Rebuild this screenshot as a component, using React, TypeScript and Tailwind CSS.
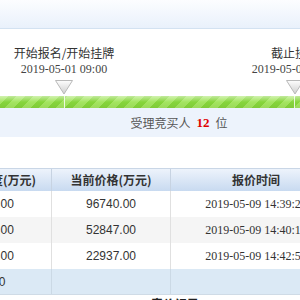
import React from 'react';

const cjk = "font-['Noto_Sans_CJK_SC',sans-serif]";
const serif = "font-['Liberation_Serif','Noto_Sans_CJK_SC',serif]";
const sans = "font-['Liberation_Sans','Noto_Sans_CJK_SC',sans-serif]";

type Node = { label: string; time: string };

const nodes: Node[] = [
  { label: '开始报名/开始挂牌', time: '2019-05-01 09:00' },
  { label: '截止挂牌', time: '2019-05-09 09:00' },
];

type Bid = { step: string; price: string; time: string };

const bids: Bid[] = [
  { step: '100.00', price: '96740.00', time: '2019-05-09 14:39:25' },
  { step: '100.00', price: '52847.00', time: '2019-05-09 14:40:13' },
  { step: '100.00', price: '22937.00', time: '2019-05-09 14:42:56' },
];

function Pointer() {
  return (
    <svg width="18" height="15" viewBox="0 0 18 15">
      <defs>
        <linearGradient id="tri" x1="0" y1="0" x2="0" y2="1">
          <stop offset="0" stopColor="#fdfdfd" />
          <stop offset="1" stopColor="#cfcfcf" />
        </linearGradient>
      </defs>
      <path d="M0.5 0.5 L17.5 0.5 L9 14 Z" fill="url(#tri)" stroke="#b9b9b9" strokeWidth="1" />
    </svg>
  );
}

function App() {
  return (
    <div className="w-[300px] h-[300px] overflow-hidden bg-white text-[#333]">
      {/* top strip */}
      <div className="h-[29px] bg-gradient-to-b from-[#fcfdff] to-[#e9f1fb] border-b border-[#d3e2f1]" />

      {/* timeline nodes */}
      <div className="flex pt-[16px] pl-[4px] gap-[111px]">
        {nodes.map((n) => (
          <div key={n.label} className="w-[120px] shrink-0 flex flex-col items-center">
            <div className={`${cjk} text-[12px] leading-[16px] text-[#333] whitespace-nowrap`}>{n.label}</div>
            <div className={`${serif} text-[12px] leading-[16px] text-[#444] whitespace-nowrap`}>{n.time}</div>
            <div className="mt-[3px] h-[16px]">
              <Pointer />
            </div>
          </div>
        ))}
      </div>

      {/* progress bar */}
      <div className="relative h-[12px] bg-[repeating-linear-gradient(135deg,#a3e55f_0px,#a3e55f_6px,#86d53b_6px,#86d53b_12px)]">
        <div className="absolute inset-0 bg-gradient-to-b from-white/50 via-transparent to-black/5" />
        <div className="absolute top-0 bottom-0 left-[64px] w-px bg-white/80" />
        <div className="absolute top-0 bottom-0 left-[294px] w-px bg-white/80" />
      </div>

      {/* applicants */}
      <div className={`h-[29px] bg-[#edf3fc] flex items-center justify-center pl-[58px] ${cjk} text-[12px] text-[#555]`}>
        受理竞买人
        <span className={`${serif} font-bold text-[#e00000] text-[13px] mx-[6px]`}>12</span>
        位
      </div>

      {/* bid table */}
      <div className="mt-[31px] -ml-[60px] w-[401px]">
        <div className="flex h-[23px] border-t border-[#c9d6e6] bg-gradient-to-b from-[#edf3fb] to-[#c8daf0] font-bold text-[12px]">
          <div className={`${cjk} w-[112px] border-r border-[#c7d3e2] flex items-center justify-center`}>加价幅度(万元)</div>
          <div className={`${cjk} w-[119px] border-r border-[#c7d3e2] flex items-center justify-center`}>当前价格(万元)</div>
          <div className={`${cjk} w-[170px] flex items-center justify-center`}>报价时间</div>
        </div>
        {bids.map((b, i) => (
          <div key={b.time} className={`flex h-[26px] text-[12px] ${i === 1 ? 'bg-[#f5f5f5]' : 'bg-white'}`}>
            <div className={`${sans} w-[112px] border-r border-[#e0e0e0] flex items-center justify-center`}>{b.step}</div>
            <div className={`${sans} w-[119px] border-r border-[#e0e0e0] flex items-center justify-center`}>{b.price}</div>
            <div className={`${serif} w-[170px] flex items-center justify-center`}>{b.time}</div>
          </div>
        ))}
        <div className="flex h-[26px] text-[12px] bg-[#dbe9f5] border-b border-[#cfdbe6]">
          <div className={`${sans} w-[112px] border-r border-[#cbd9e5] flex items-center justify-center`}>100</div>
          <div className="w-[119px] border-r border-[#cbd9e5]" />
          <div className="w-[170px]" />
        </div>
      </div>

      <div className={`${cjk} pt-[1px] pl-[151px] text-[12px] leading-[16px] font-bold text-[#222]`}>竞价记录</div>
    </div>
  );
}

export default App;
